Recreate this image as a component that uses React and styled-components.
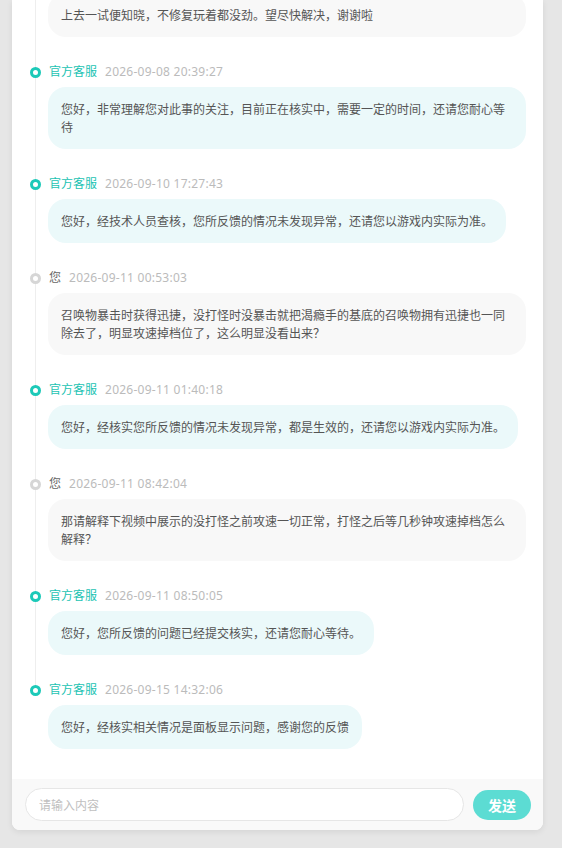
import React from 'react';
import styled, { createGlobalStyle } from 'styled-components';

const GlobalStyle = createGlobalStyle`
  html, body {
    margin: 0;
    padding: 0;
    background: #e6e6e6;
  }
  body {
    font-family: "Noto Sans", "Noto Sans CJK SC", sans-serif;
  }
`;

const Page = styled.div`
  height: 848px;
  padding: 0 19px 0 12px;
  box-sizing: border-box;
  display: flex;
  flex-direction: column;
`;

const Card = styled.div`
  height: 830px;
  background: #fff;
  border-radius: 0 0 8px 8px;
  box-shadow: 0 2px 6px rgba(0, 0, 0, 0.08);
  display: flex;
  flex-direction: column;
  overflow: hidden;
`;

const ChatBody = styled.div`
  flex: 1;
  min-height: 0;
  overflow: hidden;
  display: flex;
  flex-direction: column;
  justify-content: flex-end;
  padding: 0 17px 5px 18px;
`;

const Item = styled.div`
  position: relative;
  padding-bottom: 25px;

  &::before {
    content: '';
    position: absolute;
    left: 5px;
    top: 10px;
    bottom: -10px;
    width: 1px;
    background: #eeeeee;
    display: ${p => (p.$last ? 'none' : 'block')};
  }
`;

const Head = styled.div`
  display: flex;
  align-items: center;
  height: 20px;
  font-size: 12px;
  line-height: 20px;
`;

const Dot = styled.span`
  position: relative;
  z-index: 1;
  width: 11px;
  height: 11px;
  border-radius: 50%;
  box-sizing: border-box;
  border: 3.5px solid ${p => (p.$staff ? '#1cc9b8' : '#d6d6d6')};
  background: #fff;
  margin-right: 8px;
  flex-shrink: 0;
`;

const Name = styled.span`
  color: ${p => (p.$staff ? '#1cc3b3' : '#666')};
  margin-right: 8px;
`;

const Time = styled.span`
  color: #bbbbbb;
  letter-spacing: 0.25px;
`;

const BubbleRow = styled.div`
  display: flex;
`;

const Bubble = styled.div`
  flex: ${p => (p.$full ? '1' : '0 1 auto')};
  max-width: calc(100% - 18px);
  box-sizing: border-box;
  margin: 5px 0 0 18px;
  padding: 13px 13px;
  border-radius: 18px;
  background: ${p => (p.$staff ? '#ebf9fa' : '#f8f8f8')};
  color: #555;
  font-size: 12px;
  line-height: 18px;
  font-family: "Noto Sans CJK SC", sans-serif;
`;

const Footer = styled.div`
  height: 51px;
  background: #f9f9f9;
  display: flex;
  align-items: center;
  padding: 0 12px 0 13px;
  gap: 9px;
`;

const Input = styled.input`
  flex: 1;
  height: 33px;
  box-sizing: border-box;
  border: 1px solid #e6e6e6;
  border-radius: 17px;
  background: #fff;
  padding: 0 13px;
  font-size: 12px;
  font-family: "Noto Sans CJK SC", sans-serif;
  outline: none;
  &::placeholder {
    color: #c0c0c0;
  }
`;

const SendButton = styled.button`
  width: 58px;
  height: 30px;
  border: none;
  border-radius: 15px;
  background: #5cdcd3;
  color: #fff;
  font-size: 14px;
  font-weight: bold;
  font-family: "Noto Sans CJK SC", sans-serif;
`;

const messages = [
  { staff: false, full: true, name: '您', time: '2026-09-06 18:12:40', text: '上去一试便知晓，不修复玩着都没劲。望尽快解决，谢谢啦' },
  { staff: true, name: '官方客服', time: '2026-09-08 20:39:27', text: '您好，非常理解您对此事的关注，目前正在核实中，需要一定的时间，还请您耐心等待' },
  { staff: true, name: '官方客服', time: '2026-09-10 17:27:43', text: '您好，经技术人员查核，您所反馈的情况未发现异常，还请您以游戏内实际为准。' },
  { staff: false, name: '您', time: '2026-09-11 00:53:03', text: '召唤物暴击时获得迅捷，没打怪时没暴击就把渴瘾手的基底的召唤物拥有迅捷也一同除去了，明显攻速掉档位了，这么明显没看出来？' },
  { staff: true, name: '官方客服', time: '2026-09-11 01:40:18', text: '您好，经核实您所反馈的情况未发现异常，都是生效的，还请您以游戏内实际为准。' },
  { staff: false, name: '您', time: '2026-09-11 08:42:04', text: '那请解释下视频中展示的没打怪之前攻速一切正常，打怪之后等几秒钟攻速掉档怎么解释？' },
  { staff: true, name: '官方客服', time: '2026-09-11 08:50:05', text: '您好，您所反馈的问题已经提交核实，还请您耐心等待。' },
  { staff: true, name: '官方客服', time: '2026-09-15 14:32:06', text: '您好，经核实相关情况是面板显示问题，感谢您的反馈' },
];

const App = () => {
  return (
    <Page>
      <GlobalStyle />
      <Card>
        <ChatBody>
          {messages.map((m, i) => (
            <Item key={i} $last={i === messages.length - 1}>
              <Head>
                <Dot $staff={m.staff} />
                <Name $staff={m.staff}>{m.name}</Name>
                <Time>{m.time}</Time>
              </Head>
              <BubbleRow>
                <Bubble $staff={m.staff} $full={m.full}>{m.text}</Bubble>
              </BubbleRow>
            </Item>
          ))}
        </ChatBody>
        <Footer>
          <Input placeholder="请输入内容" />
          <SendButton>发送</SendButton>
        </Footer>
      </Card>
    </Page>
  );
};

export default App;
